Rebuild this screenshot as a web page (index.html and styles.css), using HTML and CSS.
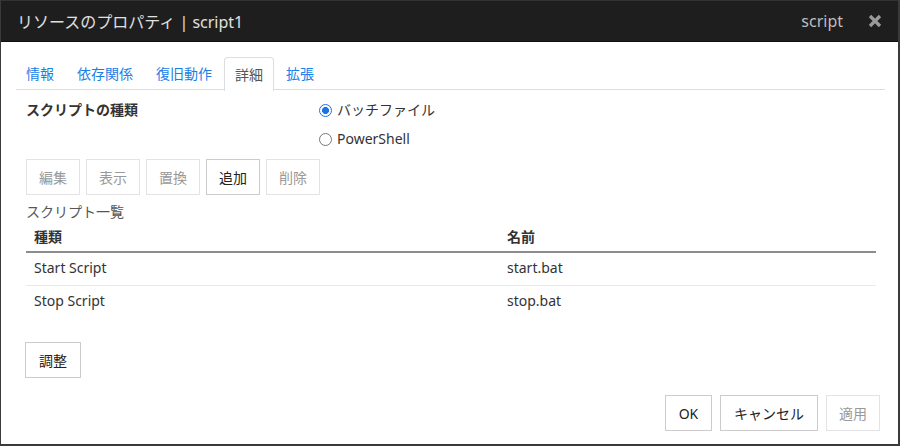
FILE: index.html
```html
<!DOCTYPE html>
<html lang="ja">
<head>
<meta charset="utf-8">
<title>リソースのプロパティ</title>
<link rel="stylesheet" href="styles.css">
</head>
<body>
<div class="dialog">
  <div class="titlebar">
    <div class="title">リソースのプロパティ | script1</div>
    <div class="title-right">
      <span class="type">script</span>
      <span class="close">
        <svg width="14" height="14" viewBox="0 0 14 14"><path d="M2 2 L12 12 M12 2 L2 12" stroke="#9a9a9a" stroke-width="3.2" stroke-linecap="butt"/></svg>
      </span>
    </div>
  </div>
  <div class="body">
    <div class="tabs">
      <div class="tab">情報</div>
      <div class="tab">依存関係</div>
      <div class="tab">復旧動作</div>
      <div class="tab active">詳細</div>
      <div class="tab">拡張</div>
    </div>
    <div class="type-row">
      <div class="label">スクリプトの種類</div>
      <div class="radios">
        <div class="radio-row"><span class="radio checked"></span><span>バッチファイル</span></div>
        <div class="radio-row"><span class="radio"></span><span>PowerShell</span></div>
      </div>
    </div>
    <div class="btn-row">
      <button class="btn disabled">編集</button>
      <button class="btn disabled">表示</button>
      <button class="btn disabled">置換</button>
      <button class="btn">追加</button>
      <button class="btn disabled">削除</button>
    </div>
    <div class="list-label">スクリプト一覧</div>
    <table class="list">
      <thead>
        <tr><th class="c1">種類</th><th>名前</th></tr>
      </thead>
      <tbody>
        <tr><td class="c1">Start Script</td><td>start.bat</td></tr>
        <tr><td class="c1">Stop Script</td><td>stop.bat</td></tr>
      </tbody>
    </table>
    <div class="adjust-row">
      <button class="btn adjust">調整</button>
    </div>
    <div class="footer">
      <button class="btn ok">OK</button>
      <button class="btn cancel">キャンセル</button>
      <button class="btn disabled apply">適用</button>
    </div>
  </div>
</div>
</body>
</html>
```
FILE: styles.css
```css
html, body {
  margin: 0;
  padding: 0;
  background: #fff;
}
body {
  font-family: "Noto Sans", "Noto Sans CJK JP", sans-serif;
  font-size: 14px;
  color: #333;
}
.dialog {
  width: 900px;
  height: 446px;
  box-sizing: border-box;
  border-left: 1px solid #3a3a3a;
  border-right: 2px solid #3a3a3a;
  border-bottom: 2px solid #3a3a3a;
  display: flex;
  flex-direction: column;
}
.titlebar {
  height: 42px;
  box-sizing: border-box;
  background: #1e1e1e;
  border-top: 1px solid #333;
  border-bottom: 1px solid #111;
  display: flex;
  align-items: center;
  justify-content: space-between;
  padding: 0 16px 0 16px;
}
.title {
  color: #e0e0e0;
  font-size: 16px;
}
.title-right {
  display: flex;
  align-items: center;
  gap: 25px;
}
.type {
  color: #bdbdbd;
  font-size: 16px;
}
.close {
  display: flex;
  align-items: center;
}
.body {
  flex: 1;
  padding: 15px 13px 0 15px;
  display: flex;
  flex-direction: column;
}
.tabs {
  display: flex;
  gap: 1px;
  border-bottom: 1px solid #ddd;
  height: 33px;
  box-sizing: border-box;
}
.tab {
  color: #1a80e8;
  padding: 0 10px 2px 10px;
  height: 33px;
  box-sizing: border-box;
  display: flex;
  align-items: center;
  border: 1px solid transparent;
  border-bottom: none;
  border-radius: 4px 4px 0 0;
}
.tab:first-child {
  margin-left: -1px;
}
.tab.active {
  color: #555;
  border-color: #ddd;
  background: #fff;
  height: 34px;
}
.type-row {
  display: flex;
  padding: 9px 0 0 10px;
}
.label {
  font-weight: bold;
  width: 293px;
  line-height: 22px;
  color: #333;
}
.radios {
  display: flex;
  flex-direction: column;
  gap: 7px;
}
.radio-row {
  display: flex;
  align-items: center;
  gap: 5px;
  line-height: 22px;
  color: #333;
}
.radio {
  width: 11px;
  height: 11px;
  border: 1px solid #777;
  border-radius: 50%;
  box-sizing: content-box;
}
.radio.checked {
  border: 1px solid #1a73e8;
  background: radial-gradient(circle, #1a73e8 0 3.2px, #fff 3.8px);
}
.btn-row {
  display: flex;
  gap: 6px;
  padding: 9px 0 0 10px;
}
.btn {
  font-family: inherit;
  font-size: 14px;
  height: 36px;
  min-width: 54px;
  padding: 0 12px;
  background: #fff;
  border: 1px solid #ccc;
  color: #222;
  box-sizing: border-box;
  border-radius: 0;
}
.btn.disabled {
  color: #999;
  border-color: #e3e3e3;
}
.list-label {
  padding: 7px 0 0 10px;
  color: #555;
  line-height: 20px;
}
.list {
  margin: 2px 0 0 10px;
  width: 850px;
  border-collapse: collapse;
}
.list th {
  text-align: left;
  font-weight: bold;
  padding: 3px 8px 4px 8px;
  border-bottom: 2px solid #8c8c8c;
  line-height: 20px;
}
.list td {
  padding: 5px 8px 7px 8px;
  line-height: 20px;
  border-top: 1px solid #e9e9e9;
}
.list tbody tr:first-child td {
  border-top: none;
}
.list .c1 {
  width: 457px;
}
.adjust-row {
  padding: 24px 0 0 9px;
}
.btn.adjust {
  height: 36px;
  width: 56px;
}
.footer {
  display: flex;
  justify-content: flex-end;
  gap: 8px;
  padding: 17px 5px 0 0;
}
.btn.ok {
  width: 47px;
  min-width: 0;
}
.btn.cancel {
  width: 98px;
}
.btn.apply {
  width: 54px;
}
```
